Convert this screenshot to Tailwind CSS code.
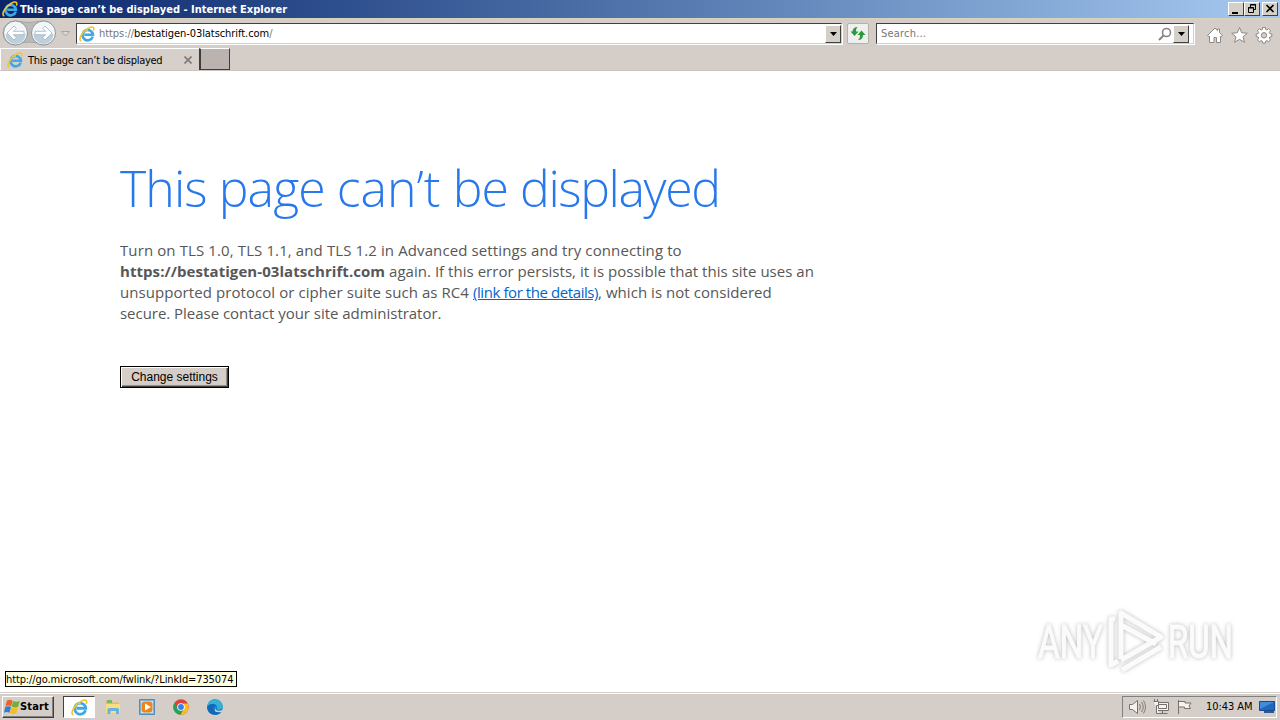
<!DOCTYPE html>
<html lang="en">
<head>
  <meta charset="UTF-8" />
  <meta name="viewport" content="width=device-width, initial-scale=1.0" />
  <title>This page can’t be displayed - Internet Explorer</title>
  <script src="https://cdn.jsdelivr.net/npm/@tailwindcss/browser@4"></script>
</head>
<body class="w-[1280px] h-[720px] overflow-hidden flex flex-col bg-white text-black text-[11px] leading-[14px] whitespace-nowrap font-['DejaVu_Sans_Condensed','DejaVu_Sans',sans-serif]">

  <!-- shared icons -->
  <svg class="hidden">
    <symbol id="ie" viewBox="0 0 16 16">
      <path d="M13.700 10.600A5.200 5.200 0 1 1 13.900 8.700H5.200" fill="none" stroke="#3fa9e6" stroke-width="2.600" />
      <path d="M4 6.500Q6 3.700 9 4" fill="none" stroke="#a5def9" stroke-width="1" />
      <path d="M1.700 14.700C-.8 12.500 4 5.200 9.300 2.300 12.500.500 15.500.300 14.600 4" fill="none" stroke="#f2c52f" stroke-width="1.600" stroke-linecap="round" />
    </symbol>
    <symbol id="down" viewBox="0 0 7 4">
      <path d="M0 0h7L3.500 4z" fill="currentColor" />
    </symbol>
  </svg>

  <header class="h-[71px] shrink-0 bg-[#d4cdc8]">
    <!-- title bar -->
    <div class="h-[18px] flex items-center pl-[2px] pr-[2px] bg-linear-to-r from-[#0a246a] to-[#a6caf0] text-white">
      <svg class="w-4 h-4"><use href="#ie" /></svg>
      <h1 class="ml-[2px] grow pt-px text-[11px] font-bold tracking-[0.01px]">This page can’t be displayed - Internet Explorer</h1>
      <div class="flex h-[14px] text-black">
        <button class="w-4 h-[14px] bg-[#d4d0c8] border border-t-white border-l-white border-r-[#404040] border-b-[#404040]">
          <svg class="w-[14px] h-3" viewBox="0 0 14 12"><path d="M3 9h6v2H3z" /></svg>
        </button>
        <button class="w-4 h-[14px] bg-[#d4d0c8] border border-t-white border-l-white border-r-[#404040] border-b-[#404040]">
          <svg class="w-[14px] h-3" viewBox="0 0 14 12" fill="none" stroke="#000"><path d="M5.500 4V1.500h5v5H8M5 2h6" /><path d="M3.500 4.500h5v5h-5zM3 5h6" /></svg>
        </button>
        <button class="ml-[2px] w-4 h-[14px] bg-[#d4d0c8] border border-t-white border-l-white border-r-[#404040] border-b-[#404040]">
          <svg class="w-[14px] h-3" viewBox="0 0 14 12"><path d="M3.500 2l7 7M10.500 2l-7 7" stroke="#000" stroke-width="1.700" /></svg>
        </button>
      </div>
    </div>

    <!-- navigation bar -->
    <div class="h-[30px] flex items-start pt-[4px] border-t border-[#d8d3bd]">
      <svg class="w-[76px] h-[26px] -mt-[3px]" viewBox="0 0 76 26">
        <path d="M15 1Q29 4 43 1a12 12 0 0 1 0 24Q29 19 15 25a12 12 0 0 1 0-24z" fill="#bdb9b7" stroke="#aaa5a2" />
        <g fill="#f1f6f9" stroke="#8a97a2">
          <circle cx="15.500" cy="13" r="12" />
          <circle cx="43.500" cy="13" r="12" />
        </g>
        <g fill="#bccfdb">
          <path d="M5.500 14a10 10 0 0 0 20 0z" />
          <path d="M33.500 14a10 10 0 0 0 20 0z" />
        </g>
        <g fill="#fff" stroke="#a3b3c0" stroke-width=".8">
          <path d="M7 13l7-7 2.300 2.300-3 3H24v3.400H13.300l3 3L14 20z" />
          <path d="M52 13l-7-7-2.300 2.300 3 3H35v3.400h10.700l-3 3L45 20z" />
        </g>
        <path d="M61.500 11.500h8l-4 4.500z" fill="#dcd8d5" stroke="#aaa6a3" />
      </svg>
      <div class="w-[766px] h-[21px] flex items-center pl-[2px] bg-white border border-t-[#404040] border-l-[#404040] border-r-[#d4d0c8] border-b-[#d4d0c8] shadow-[1px_1px_0_#fff]">
        <svg class="w-4 h-4"><use href="#ie" /></svg>
        <div class="ml-[4px] grow pt-px text-[#777] tracking-[-0.06px]">https://<span class="text-black">bestatigen-03latschrift.com</span>/</div>
        <button class="w-4 h-[18px] flex items-center justify-center bg-[#d4d0c8] border border-t-white border-l-white border-r-[#404040] border-b-[#404040]">
          <svg class="w-[7px] h-1"><use href="#down" /></svg>
        </button>
      </div>
      <button class="ml-[5px] w-[22px] h-[21px] bg-[#eef0f0] border border-[#b5b0ac] rounded-[2px]">
        <svg class="w-5 h-[19px]" viewBox="0 0 20 19" fill="#2c9a3c">
          <path d="M9.500 3Q5 3 4.500 7.500H2.500l4 4.500 4-4.500H8Q7.500 5 9.500 3z" />
          <path d="M10 16q5 0 5-5h2.500l-4-4.500-4 4.500H12q.500 3-2 5z" />
        </svg>
      </button>
      <div class="ml-[7px] w-[318px] h-[21px] flex items-center pl-[4px] pr-[4px] bg-white border border-t-[#404040] border-l-[#404040] border-r-[#d4d0c8] border-b-[#d4d0c8] shadow-[1px_1px_0_#fff]">
        <div class="grow pt-px text-[#777] tracking-[0.2px]">Search...</div>
        <svg class="w-[14px] h-[14px] mr-px" viewBox="0 0 14 14" fill="none" stroke="#858585"><circle cx="8.500" cy="5.500" r="4" stroke-width="1.600" /><path d="M5.500 8.500L1 13" stroke-width="2" /></svg>
        <button class="w-4 h-[18px] flex items-center justify-center bg-[#d4d0c8] border border-t-white border-l-white border-r-[#404040] border-b-[#404040]">
          <svg class="w-[7px] h-1"><use href="#down" /></svg>
        </button>
      </div>
      <svg class="ml-[12px] mt-[3px] w-[68px] h-[18px]" viewBox="0 0 68 18" fill="#fff" stroke="#8e8987">
        <path d="M1.500 9.500L9 2l2.500 2.500V3h2v3.500l3 3-1.500 1.200-.5-.5v6.300h-4v-5H8v5H3.500v-6.300l-.5.500z" />
        <path d="M33.500 1.500l2.200 5.300 5.600.4-4.300 3.600 1.400 5.500-4.900-3-4.900 3 1.400-5.500-4.300-3.600 5.600-.4z" />
        <path d="M56.700 1.500h2.600l.4 2 1.200.5 1.700-1.200 1.900 1.900-1.200 1.700.5 1.200 2 .4v2.600l-2 .4-.5 1.200 1.200 1.700-1.900 1.900-1.700-1.200-1.200.5-.4 2h-2.600l-.4-2-1.200-.5-1.700 1.200-1.900-1.900 1.200-1.700-.5-1.200-2-.4V8l2-.4.5-1.200-1.200-1.700 1.900-1.900L55.100 4l1.200-.5z" />
        <circle cx="58" cy="9.300" r="2.700" fill="#d4cdc8" />
      </svg>
    </div>

    <!-- tabs -->
    <div class="h-[23px] flex border-b border-[#c9c4c1]">
      <div class="w-[199px] flex items-center pl-[6px] pr-[7px] border-t border-l border-white bg-[#d6cfca]">
        <svg class="w-4 h-4"><use href="#ie" /></svg>
        <span class="ml-[5px] grow pt-[2px] tracking-[-0.28px]">This page can’t be displayed</span>
        <svg class="w-2 h-2" viewBox="0 0 8 8"><path d="M.5.500l7 7M7.500.500l-7 7" stroke="#807c79" stroke-width="1.700" /></svg>
      </div>
      <div class="w-[31px] h-[22px] bg-[#bbb3af] border-l-2 border-r border-b border-t border-[#403c3a] border-t-white"></div>
    </div>
  </header>

  <main class="grow relative pl-[120px] pt-[86px] text-[#575757] font-['Open_Sans','Noto_Sans',sans-serif]">
    <h2 class="h-[63px] text-[50px] leading-[63px] font-light tracking-[-0.92px] text-[#2778ec]">This page <span class="tracking-[0px]">can’t</span> be <span class="tracking-[-1.4px]">displayed</span></h2>
    <div class="mt-[20px] text-[15px] leading-[21px]">
      <p class="tracking-[0.11px]">Turn on TLS 1.0, TLS 1.1, and TLS 1.2 in Advanced settings and try connecting to</p>
      <p><b class="tracking-[0.06px]">https://bestatigen-03latschrift.com</b> <span class="tracking-[0.03px]">again. If this error persists, it is possible that this site uses an</span></p>
      <p><span class="tracking-[0.07px]">unsupported protocol or cipher suite such as RC4 </span><a href="#" class="text-[#0066cc] underline tracking-[-0.42px]">(link for the details)</a><span class="tracking-[0.04px]">, which is not considered</span></p>
      <p class="tracking-[-0.03px]">secure. Please contact your site administrator.</p>
    </div>
    <button class="block mt-[42px] w-[109px] h-[22px] bg-[#d4cdc8] border border-black text-black text-[12px] leading-[18px] font-['Liberation_Sans',sans-serif] shadow-[inset_1px_1px_0_#fff,inset_-1px_-1px_0_#404040,inset_-2px_-2px_0_#908c88]">Change settings</button>

    <!-- link target tooltip -->
    <div class="absolute left-[5px] bottom-[5px] w-[232px] h-[16px] border border-black bg-[#ffffe1] text-black text-[11px] leading-[15px] tracking-[-0.11px] font-['DejaVu_Sans_Condensed',sans-serif]">http://go.microsoft.com/fwlink/?LinkId=735074</div>

    <!-- watermark -->
    <div class="absolute left-[1038px] top-[537px] w-[196px] h-[66px]">
      <svg class="w-[196px] h-[66px] overflow-visible drop-shadow-[0_0_2px_#bbb]" viewBox="0 0 196 66">
        <g fill="#fbfbfb" stroke="#fbfbfb" stroke-width="1.200" font-family="Roboto" font-size="47">
          <text x="0" y="50" textLength="65" lengthAdjust="spacingAndGlyphs">ANY</text>
          <text x="130" y="50" textLength="65" lengthAdjust="spacingAndGlyphs">RUN</text>
        </g>
        <g fill="none" stroke="#fbfbfb" stroke-width="5" stroke-linejoin="round">
          <path d="M83 51V5l40 24-40 23M83 17l35 19" />
          <path d="M77 11h-4v46l7-4M84 62l39-23" />
        </g>
      </svg>
    </div>
  </main>

  <!-- taskbar -->
  <footer class="h-[28px] shrink-0 flex items-center pl-[2px] pr-[3px] pt-px bg-[#d4cdc8] border-t border-[#d4d0c8] shadow-[inset_0_1px_0_#fff]">
    <button class="w-[52px] h-[22px] flex items-center pl-px bg-[#d4cdc8] border border-t-white border-l-white border-r-[#404040] border-b-[#404040] shadow-[inset_-1px_-1px_0_#808080] font-bold">
      <svg class="w-4 h-4" viewBox="0 0 16 16">
        <path d="M3 1.500Q6 0 8.500 1.700L7.200 7.300Q4.500 6 1.500 7z" fill="#e8642a" />
        <path d="M9 2Q12 3.500 15.700 2L14 8Q11 9 7.700 7.500z" fill="#76ae3b" />
        <path d="M1.300 7.800Q4.500 6.500 7 8L5.500 13.800Q3 12.500 0 13.700z" fill="#397dc7" />
        <path d="M7.500 8.300Q10.500 9.800 13.800 8.700L12.300 14.500Q9.200 15.500 6 14z" fill="#f2bd26" />
      </svg>
      <span class="tracking-[0.15px]">Start</span>
    </button>
    <div class="ml-[9px] w-8 h-[22px] flex items-center justify-center bg-white border border-t-[#404040] border-l-[#404040] border-r-white border-b-white">
      <svg class="w-[17px] h-[17px]" viewBox="0 0 16 16"><use href="#ie" width="16" height="16" /></svg>
    </div>
    <div class="ml-[10px] flex gap-[18px]">
      <svg class="w-4 h-4" viewBox="0 0 16 16">
        <path d="M1 2h5l1 1.500h7V14H1z" fill="#e9bd4e" />
        <path d="M2 1h5v3H2z" fill="#77b96b" />
        <path d="M1 5h14v9H1z" fill="#f9dc83" />
        <path d="M2.500 15v-4.500q0-1.500 1.500-1.500h8.500q1.500 0 1.500 1.500V15h-3v-3h-5.500v3z" fill="#65b4df" />
      </svg>
      <svg class="w-4 h-4" viewBox="0 0 16 16">
        <path d="M.5.500h15v15H.5z" fill="#75b4df" stroke="#528ebd" />
        <path d="M2 2h12v12H2z" fill="#cce8f8" />
        <rect x="2.500" y="2.500" width="11" height="11" rx="3" fill="#ef8518" />
        <path d="M6 4.500L12 8l-6 3.500z" fill="#fff" />
      </svg>
      <svg class="w-4 h-4" viewBox="0 0 16 16">
        <circle cx="8" cy="8" r="7.700" fill="#db4437" />
        <path d="M1.300 4.200A7.700 7.700 0 0 0 7.500 15.700L11 9.500H5z" fill="#23a455" />
        <path d="M14.700 4.500A7.700 7.700 0 0 1 7.500 15.700L11.200 9.500 10.500 4.500z" fill="#fbc116" />
        <circle cx="8" cy="8" r="3.800" fill="#fff" />
        <circle cx="8" cy="8" r="2.900" fill="#3b7ded" />
      </svg>
      <svg class="w-4 h-4" viewBox="0 0 16 16">
        <circle cx="8" cy="8" r="7.800" fill="#1683d1" />
        <path d="M.3 7C1-2 14.500-1.500 15.700 7c.3 3-2.700 4-5.700 3.200C12 6 5 2.500.3 7z" fill="#34b1d3" />
        <path d="M.3 7C5 3.500 9 5 9.500 7 5 7 5 13 11 14.800 4 18-.5 12 .3 7z" fill="#1269b8" />
        <path d="M9.500 7Q7 10 10 11.500q3 1 6-.7v5.200h-4Q5 12 9.500 7z" fill="#d4cdc8" />
        <path d="M6 9q0 5 8.500 4.200Q11 17 7 15z" fill="#1269b8" />
      </svg>
    </div>
    <div class="ml-auto w-[155px] h-[22px] flex items-center pl-[6px] pr-px border border-t-[#808080] border-l-[#808080] border-r-white border-b-white">
      <svg class="w-[68px] h-[18px]" viewBox="0 0 68 18" fill="#f5f3f1" stroke="#77716e">
        <path d="M.5 6.500h3l5-4v13l-5-4h-3z" />
        <path d="M10.500 6q2 3 0 6M12.500 4q3.500 5 0 10M14.500 2.500q4 6.500 0 13" fill="none" stroke-width=".9" />
        <path d="M27.500 4.500h12v8h-12zM29.500 6.500h8v4h-8zM33.500 13v2.500M29.500 15.500h9" />
        <path d="M24.500 3.500h5v4h-2v8h3M25.500 1v2M28.500 1v2" />
        <path d="M49.500 2v14M49.500 3.500h6.500v1.500h6l-2 3 1.500 2.500h-6v-1.500h-6z" />
      </svg>
      <span class="ml-[9px] grow tracking-[-0.05px]">10:43 AM</span>
      <svg class="w-4 h-[14px]" viewBox="0 0 16 14">
        <path d="M.5 1.500h15v9H.5z" fill="#2267bb" stroke="#174a91" />
        <path d="M1 2h14L1 9z" fill="#3e8cdd" />
        <path d="M5 11h10v2H5z" fill="#2c5a98" />
      </svg>
    </div>
  </footer>
</body>
</html>
